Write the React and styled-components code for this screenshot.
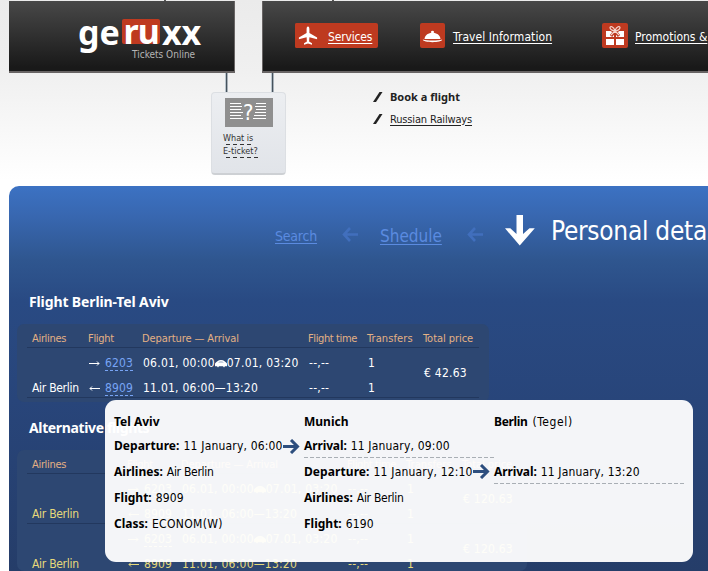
import React from "react";
import styled, { createGlobalStyle } from "styled-components";

const GlobalStyle = createGlobalStyle`
  html, body { margin: 0; height: 571px; overflow: hidden; }
  body { background: #fff; font: 12px "DejaVu Sans Condensed", "DejaVu Sans", sans-serif; color: #222; }
  *, *::before { box-sizing: border-box; }
  svg { display: block; flex: none; }
`;

const Page = styled.div`
  width: 708px;
  height: 571px;
  overflow: hidden;
  padding-left: 9px;
  background: linear-gradient(#ebebeb 0, #f0f0f0 72px, #fff 180px);
`;

const Header = styled.header`
  display: flex;
  gap: 27px;
  height: 73px;
  padding-top: 1px;
  background:
    linear-gradient(#555, #555) 155px 0 / 2px 1px no-repeat,
    linear-gradient(#555, #555) 323px 0 / 2px 1px no-repeat;
`;

const Bar = styled.div`
  height: 72px;
  flex: none;
  width: ${(p) => p.$width}px;
  background: linear-gradient(#484848, #323232 45%, #191919 95%);
  border-bottom: 2px solid #686464;
`;

const BrandBar = styled(Bar)`
  border-right: 1px solid #686464;
  padding: 6px 0 0 69px;
`;

const NavBar = styled(Bar)`
  border-left: 1px solid #686464;
  display: flex;
  padding: 22px 0 0 32px;
`;

const Logo = styled.div`
  display: flex;
  align-items: center;
  height: 50px;
  color: #fff;
  font: 700 34px/50px "Noto Sans", sans-serif;
  letter-spacing: -0.1px;
`;

const LogoMark = styled.span`
  height: 25px;
  line-height: 24px;
  padding: 0 1px 0 2px;
  margin: 0 2px 1px 2px;
  letter-spacing: -1px;
  border-radius: 2px;
  background: #be3a20;
`;

const Tagline = styled.div`
  margin: -8px 0 0 54px;
  font-size: 10px;
  line-height: 12px;
  color: #b5b5b5;
`;

const NavItem = styled.a`
  display: flex;
  flex: none;
  align-items: center;
  height: 25px;
  width: ${(p) => p.$width}px;
  margin-right: ${(p) => p.$gap || 0}px;
  border-radius: 2px;
  background: ${(p) => (p.$active ? "#be3a20" : "none")};
  color: #fff;
  white-space: nowrap;
  letter-spacing: ${(p) => p.$spacing || 0}px;
  line-height: 27px;
`;

const NavLabel = styled.span`
  text-decoration: underline;
  text-underline-offset: 2px;
  margin-top: 3px;
`;

const NavIcon = styled.span`
  display: grid;
  place-items: center;
  width: ${(p) => p.$width || 25}px;
  height: 25px;
  margin-right: ${(p) => p.$gap || 8}px;
  border-radius: 2px;
  background: #be3a20;
`;

const SubHeader = styled.div`
  display: flex;
  height: 113px;
  padding-left: 202px;
`;

const Ticket = styled.div`
  width: 75px;
`;

const Rods = styled.div`
  display: flex;
  justify-content: space-between;
  padding: 0 12px 0 14px;
  height: 19px;
`;

const Rod = styled.i`
  width: 3px;
  background: linear-gradient(90deg, #b9c4cc 0 1px, #46525c 1px 2px, #a9b2ba 2px);
`;

const TicketCard = styled.div`
  height: 83px;
  padding: 5px 12px;
  border: 1px solid #dcdfe3;
  border-bottom: 2px solid #cdd0d4;
  border-radius: 4px;
  background: linear-gradient(#eceef1, #e1e4e9);
`;

const TicketArt = styled.div`
  width: 48px;
  height: 29px;
  margin-left: 1px;
  background: #8f8f8f;
`;

const TicketText = styled.div`
  margin-top: ${(p) => p.$top}px;
  margin-left: -1px;
  width: max-content;
  height: 12px;
  font-size: 9px;
  line-height: 10px;
  color: #333;
  background: repeating-linear-gradient(90deg, transparent 0 3px, #333 3px 7px) 0 100% / 100% 1px no-repeat;
`;

const SubNav = styled.nav`
  display: flex;
  flex-direction: column;
  padding: 13px 0 0 87px;
`;

const SubNavItem = styled.a`
  display: flex;
  align-items: center;
  gap: 7px;
  height: 22px;
  font-size: 11px;
  color: #222;
  font-family: ${(p) => (p.$current ? '"Noto Sans", sans-serif' : "inherit")};
  font-weight: ${(p) => (p.$current ? 700 : 400)};
  span {
    margin-top: ${(p) => (p.$current ? -2 : 0)}px;
    text-decoration: ${(p) => (p.$current ? "none" : "underline")};
    text-underline-offset: 2px;
    letter-spacing: ${(p) => (p.$current ? 0 : -0.16)}px;
  }
`;

const Panel = styled.main`
  position: relative;
  width: 709px;
  height: 385px;
  border-radius: 10px 0 0 0;
  background: linear-gradient(#3c72c3 0, #3867b0 30px, #2f568f 74px, #294a83 115px, #28457a 215px, #253d69 385px);
`;

const Steps = styled.div`
  display: flex;
  height: 106px;
  padding: 28px 0 0 266px;
  white-space: nowrap;
  color: #5b8be0;
`;

const Step = styled.a`
  flex: none;
  height: 34px;
  width: ${(p) => p.$width}px;
  margin-right: ${(p) => p.$gap || 0}px;
  font-size: ${(p) => p.$size}px;
  line-height: 34px;
  padding-top: ${(p) => p.$top}px;
  letter-spacing: ${(p) => p.$spacing}px;
  color: ${(p) => (p.$current ? "#fff" : "inherit")};
  text-decoration: ${(p) => (p.$current ? "none" : "underline")};
  text-decoration-thickness: 1px;
  text-underline-offset: 2px;
`;

const StepArrow = styled.div`
  margin: ${(p) => p.$top}px ${(p) => p.$gap}px 0 0;
`;

const Title = styled.h2`
  margin: 0 0 0 20px;
  height: ${(p) => p.$height}px;
  font: 700 14px/20px "Noto Sans", sans-serif;
  letter-spacing: ${(p) => p.$spacing}px;
  color: #fff;
`;

const Table = styled.section`
  width: ${(p) => p.$width}px;
  height: ${(p) => p.$height}px;
  margin: 0 0 ${(p) => p.$after || 0}px 8px;
  padding: 0 10px;
  border-radius: 7px;
  background: #2d4772;
  --columns: ${(p) => p.$first}px 54px 166px 59px 56px 60px;
  color: ${(p) => (p.$tint ? "#e6d97a" : "#fff")};
`;

const HeadRow = styled.div`
  display: grid;
  grid-template-columns: var(--columns);
  height: 24px;
  padding: 6px 0 0 5px;
  border-bottom: 1px solid #22385e;
  font-size: 11px;
  line-height: 18px;
  white-space: nowrap;
  color: #e4b184;
`;

const HeadCell = styled.span`
  letter-spacing: ${(p) => p.$spacing}px;
`;

const Group = styled.div`
  display: grid;
  grid-template-columns: var(--columns);
  grid-template-rows: 25px 24px;
  padding-left: 5px;
  height: 50px;
  line-height: 30px;
  white-space: nowrap;
  letter-spacing: 0.24px;
  border-bottom: 1px solid #22385e;
`;

const Carrier = styled.span`
  letter-spacing: -0.28px;
`;

const Value = styled.span`
  padding-left: 1px;
`;

const FlightCell = styled.span`
  display: flex;
  align-items: center;
  gap: 5px;
  height: 30px;
  padding-left: 1px;
`;

const FlightNo = styled.span`
  color: ${(p) => (p.$tint ? "inherit" : "#78a4f5")};
  line-height: 14px;
  border-bottom: 1px dashed currentColor;
  height: 15px;
  margin-top: 1px;
  letter-spacing: 0.15px;
`;

const Times = styled.span`
  display: flex;
  align-items: center;
  height: 30px;
  padding-left: 1px;
`;

const Price = styled.span`
  grid-column: 6;
  grid-row: 1 / span 2;
  padding-left: 1px;
  line-height: 51px;
`;

const Popup = styled.aside`
  position: absolute;
  left: 96px;
  top: 214px;
  width: 588px;
  height: 162px;
  padding: 10px 0 0 9px;
  display: grid;
  grid-template-columns: 190px 190px 190px;
  border-radius: 11px;
  background: rgba(255, 255, 255, 0.95);
  color: #000;
  white-space: nowrap;
`;

const City = styled.div`
  display: flex;
  gap: 5px;
  height: 24px;
  line-height: 24px;
`;

const Line = styled.div`
  display: flex;
  gap: 4px;
  height: ${(p) => p.$height || 26}px;
  margin-bottom: ${(p) => p.$after || 0}px;
  line-height: ${(p) => p.$leading || 26}px;
  letter-spacing: ${(p) => p.$spacing ?? 0.18}px;
  background: ${(p) =>
    p.$dashed
      ? "repeating-linear-gradient(90deg, #a9afb5 0 4px, transparent 4px 6px) 0 100% / 100% 1px no-repeat"
      : "none"};
`;

const Label = styled.b`
  font-family: "Noto Sans", sans-serif;
  letter-spacing: ${(p) => p.$spacing || 0}px;
`;

const Onward = styled.span`
  margin: 5px 0 0 -4px;
`;

const Plane = () => (
  <svg width="20" height="20" viewBox="0 0 20 20" fill="#fff">
    <path d="M10 .5c1 0 1.400 1.300 1.400 2.600v3.800l7.700 4.600v1.800l-7.700-2.100-.3 4.300 2.900 1.800v1.400L10 17.600l-4 1.100v-1.400l2.900-1.800-.3-4.300-7.700 2.100v-1.800l7.700-4.600V3.100C8.600 1.800 9 .5 10 .5z" />
  </svg>
);

const Cloche = () => (
  <svg width="21" height="16" viewBox="0 0 21 16" fill="#fff">
    <ellipse cx="10.500" cy="4" rx="1.500" ry="1.300" />
    <path d="M2.500 11C3 7 6.500 4.800 10.500 4.800s7.500 2.200 8 6.200z" />
    <path d="M.8 11.500c4 1.300 15.400 1.300 19.400 0 0 3.500-19.400 3.500-19.400 0z" />
  </svg>
);

const Gift = () => (
  <svg width="20" height="21" viewBox="0 0 20 21">
    <path fill="#fff" d="M1 6h8v6H1zM11 6h8v6h-8zM1 14h8v6H1zM11 14h8v6h-8z" />
    <path d="M10 6C7 6 5 4 5 2.500S8.500 1 10 6c1.500-5 5-5 5-3.500S13 6 10 6zM10 6l-4 5M10 6l4 5" fill="none" stroke="#be3a20" strokeWidth="3" />
    <path d="M10 6C7 6 5 4 5 2.500S8.500 1 10 6c1.500-5 5-5 5-3.500S13 6 10 6zM10 6l-4 4M10 6l4 4" fill="none" stroke="#f6d8d0" strokeWidth="1.200" />
  </svg>
);

const TicketLines = styled.svg`
  text {
    font: 22px "DejaVu Sans Condensed", "DejaVu Sans", sans-serif;
  }
`;

const TicketDrawing = () => (
  <TicketLines width="48" height="29" viewBox="0 0 48 29" fill="#fff">
    <path d="M5 5.500h11M5 8.500h12M5 11.500h11M5 14.500h13M5 17.500h11M5 20.500h13M31 5.500h10M30 8.500h11M31 11.500h10M30 14.500h11M29 17.500h12M28 20.500h13" stroke="#fff" />
    <text x="18" y="22">?</text>
  </TicketLines>
);

const Slash = () => (
  <svg width="10" height="10" viewBox="0 0 10 10">
    <path d="M0 10 6.500 0h3L3 10z" fill="#222" />
  </svg>
);

const BackArrow = () => (
  <svg width="16" height="15" viewBox="0 0 16 15" fill="none" stroke="#416fbd" strokeWidth="2.600">
    <path d="M16 7.500H2.500M8 1 2 7.500 8 14" />
  </svg>
);

const DownArrow = () => (
  <svg width="30" height="31" viewBox="0 0 30 31" fill="#fff">
    <path d="M11.500 0h6.500v19l6.500-5.700h5.300L14.750 30.500 0 13.300h5.300L11.500 19z" />
  </svg>
);

const NextArrow = () => (
  <svg width="17" height="15" viewBox="0 0 17 15" fill="none" stroke="#2d4e7e" strokeWidth="3">
    <path d="M0 7.500h14.500M8 1 14.500 7.500 8 14" />
  </svg>
);

const Way = ({ back }) => (
  <svg width="11" height="5" viewBox="0 0 11 5" fill="none" stroke="currentColor">
    <path d={back ? "M11 2.500H1M3 .5l-2 2 2 2" : "M0 2.500h10M8 .5l2 2-2 2"} />
  </svg>
);

const Car = () => (
  <svg width="12" height="9" viewBox="0 0 12 9" fill="currentColor">
    <path d="M0 4.500C1.500 3 3 1 6 1s4.500 2 6 3.500v2.800H10L9 8.500 8 7.300H4L3 8.500 2 7.300H0z" />
    <path d="M3 3.500C4 2 8 2 9 3.500z" fill="#8ea0bd" />
  </svg>
);

const HEADINGS = [
  ["Airlines", -0.32],
  ["Flight", -0.3],
  ["Departure — Arrival", -0.09],
  ["Flight time", -0.38],
  ["Transfers", 0.1],
  ["Total price", -0.05],
];

function TableHead() {
  return (
    <HeadRow>
      {HEADINGS.map(([text, spacing]) => (
        <HeadCell key={text} $spacing={spacing}>{text}</HeadCell>
      ))}
    </HeadRow>
  );
}

function RoundTrip({ price, tint }) {
  return (
    <Group>
      <span />
      <FlightCell><Way /><FlightNo $tint={tint}>6203</FlightNo></FlightCell>
      <Times>06.01, 00:00<Car />07.01, 03:20</Times>
      <Value>--,--</Value>
      <Value>1</Value>
      <Price>{price}</Price>
      <Carrier>Air Berlin</Carrier>
      <FlightCell><Way back /><FlightNo $tint={tint}>8909</FlightNo></FlightCell>
      <Times>11.01, 06:00—13:20</Times>
      <Value>--,--</Value>
      <Value>1</Value>
    </Group>
  );
}

export default function App() {
  return (
    <Page>
      <GlobalStyle />
      <Header>
        <BrandBar $width={226}>
          <Logo>ge<LogoMark>ru</LogoMark>xx</Logo>
          <Tagline>Tickets Online</Tagline>
        </BrandBar>
        <NavBar $width={447}>
          <NavItem $active $width={83} $gap={42} $spacing={-0.15}>
            <NavIcon><Plane /></NavIcon><NavLabel>Services</NavLabel>
          </NavItem>
          <NavItem $width={134} $gap={48} $spacing={0.07}>
            <NavIcon><Cloche /></NavIcon><NavLabel>Travel Information</NavLabel>
          </NavItem>
          <NavItem $width={120}>
            <NavIcon $width={26} $gap={7}><Gift /></NavIcon><NavLabel>Promotions &amp;</NavLabel>
          </NavItem>
        </NavBar>
      </Header>

      <SubHeader>
        <Ticket>
          <Rods><Rod /><Rod /></Rods>
          <TicketCard>
            <TicketArt><TicketDrawing /></TicketArt>
            <TicketText $top={6}>What is</TicketText>
            <TicketText $top={1}>E-ticket?</TicketText>
          </TicketCard>
        </Ticket>
        <SubNav>
          <SubNavItem $current><Slash /><span>Book a flight</span></SubNavItem>
          <SubNavItem><Slash /><span>Russian Railways</span></SubNavItem>
        </SubNav>
      </SubHeader>

      <Panel>
        <Steps>
          <Step $size={14} $width={42} $gap={25} $top={5} $spacing={-0.2}>Search</Step>
          <StepArrow $top={13} $gap={22}><BackArrow /></StepArrow>
          <Step $size={17} $width={62} $gap={25} $top={5} $spacing={0}>Shedule</Step>
          <StepArrow $top={13} $gap={22}><BackArrow /></StepArrow>
          <StepArrow $top={1} $gap={16}><DownArrow /></StepArrow>
          <Step $current $size={26} $width={170} $top={0} $spacing={-0.27}>Personal deta</Step>
        </Steps>

        <Title $height={32} $spacing={-0.12}>Flight Berlin-Tel Aviv</Title>
        <Table $width={472} $height={78} $first={56} $after={16}>
          <TableHead />
          <RoundTrip price="€ 42.63" />
        </Table>

        <Title $height={32} $spacing={-0.36}>Alternative flights</Title>
        <Table $tint $width={510} $height={121} $first={95}>
          <TableHead />
          <RoundTrip tint price="€ 120.63" />
          <RoundTrip tint price="€ 120.63" />
        </Table>

        <Popup>
          <div>
            <City><Label>Tel Aviv</Label></City>
            <Line $height={25} $leading={24}><Label $spacing={0.08}>Departure:</Label>11 January, 06:00<Onward><NextArrow /></Onward></Line>
            <Line $spacing={-0.28}><Label>Airlines:</Label>Air Berlin</Line>
            <Line><Label>Flight:</Label>8909</Line>
            <Line $spacing={0.35}><Label>Class:</Label>ECONOM(W)</Line>
          </div>
          <div>
            <City><Label>Munich</Label></City>
            <Line $height={24} $leading={24} $after={1} $dashed><Label $spacing={-0.12}>Arrival:</Label>11 January, 09:00</Line>
            <Line><Label $spacing={0.08}>Departure:</Label>11 January, 12:10<Onward><NextArrow /></Onward></Line>
            <Line $spacing={-0.28}><Label>Airlines:</Label>Air Berlin</Line>
            <Line><Label>Flight:</Label>6190</Line>
          </div>
          <div>
            <City><Label $spacing={-0.35}>Berlin</Label><HeadCell $spacing={0.6}>(Tegel)</HeadCell></City>
            <Line $height={25} />
            <Line $height={25} $dashed><Label $spacing={-0.12}>Arrival:</Label>11 January, 13:20</Line>
          </div>
        </Popup>
      </Panel>
    </Page>
  );
}
